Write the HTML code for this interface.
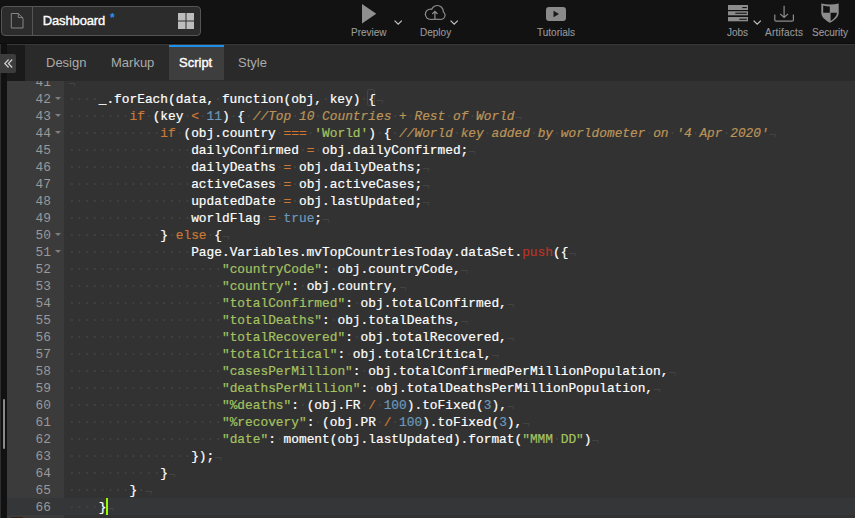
<!DOCTYPE html>
<html><head><meta charset="utf-8">
<style>
*{margin:0;padding:0;box-sizing:border-box}
html,body{width:855px;height:518px;overflow:hidden;background:#121212;font-family:"Liberation Sans",sans-serif}
#top{position:absolute;left:0;top:0;width:855px;height:44px;background:#121212}
#dash{position:absolute;left:1px;top:6px;width:200px;height:30px;border:1px solid #555;border-radius:4px;background:#2c2c2c}
#dash .div{position:absolute;left:30px;top:0;width:1px;height:28px;background:#555}
#dash .t{position:absolute;left:40.8px;top:6px;font-size:13px;color:#fff;-webkit-text-stroke:0.35px #fff;letter-spacing:-0.15px}
#dash .star{position:absolute;left:108px;top:4px;font-size:12px;font-weight:bold;color:#2e8ff0}
svg{position:absolute;overflow:visible}
.lbl{position:absolute;top:26.9px;font-size:10px;color:#999;white-space:nowrap;-webkit-text-stroke:0.1px #999}
#tabs{position:absolute;left:0;top:44px;width:855px;height:37px;background:#2a2a2a;border-top:1px solid #383838}
#tline{position:absolute;left:0;top:43px;width:855px;height:1px;background:#0c0c0c}
#tabs .lft{position:absolute;left:7px;top:0;width:18px;height:37px;background:#1a1a1a}
#tabs .tab{position:absolute;top:10px;font-size:13px;color:#aaa}
#tabs .act{position:absolute;left:169px;top:0;width:55px;height:35px;background:#3e3e3e;border-top:2px solid #1e90ea}
#coll{position:absolute;left:0;top:54px;width:16px;height:19px;background:#3c3c3c;border-radius:0 2px 2px 0}
#lstrip{position:absolute;left:0;top:44px;width:1px;height:474px;background:#2e2e2e}
#bstrip{position:absolute;left:1px;top:44px;width:6px;height:474px;background:#111}
#thumb{position:absolute;left:3px;top:399px;width:2px;height:50px;background:#8a8a8a;border-radius:1px}
#ed{position:absolute;left:7px;top:81px;width:848px;height:437px;background:#323232;overflow:hidden}
#gut{position:absolute;left:0;top:-8px;width:57px;height:460px;background:#3b3b3b}
#gut div{position:relative;height:17px;line-height:17px;padding-top:1px;text-align:right;padding-right:13px;color:#999;font-family:"Liberation Mono",monospace;font-size:12.83px}
#gut div.al{background:#353637}
#gut u{position:absolute;left:48.3px;top:7px;width:0;height:0;border-left:3px solid transparent;border-right:3px solid transparent;border-top:3px solid #7e7e7e}
#code{position:absolute;left:60.9px;top:-7px;width:800px;font-family:"Liberation Mono",monospace;font-size:12.83px;color:#fff;white-space:pre;-webkit-text-stroke:0.2px}
#code div{height:17px;line-height:17px}
#alb{position:absolute;left:57px;top:417px;width:800px;height:17px;background:#353637}
#code i{font-style:normal;color:#444;-webkit-text-stroke:0}
#code i.eol{position:relative;top:1.5px;color:#434343}
#code b{font-weight:normal}
#code .k{color:#cc7833}
#code .c{color:#6c99bb}
#code .s{color:#a5c261}
#code .m{color:#bc9458;font-style:italic}
#code .m i{font-style:normal}
#code .f{color:#b83426}
.bm{position:absolute;width:7.7px;height:17px;border:1px solid #444;border-radius:2px}
#cursor{position:absolute;left:106px;top:498px;width:2px;height:17px;background:#91ff00}
#brown{position:absolute;left:11px;top:517px;width:12px;height:1px;background:#3a1e10}
</style></head><body>
<div id="top">
  <div id="dash">
    <svg style="left:8px;top:5px" width="16" height="18" viewBox="0 0 16 18"><path d="M1.3 1.5 H8.3 L13 6.2 V16 H1.3 Z M8.3 1.5 V5.6 H13" fill="none" stroke="#858585" stroke-width="1"/></svg>
    <div class="div"></div>
    <div class="t">Dashboard</div>
    <div class="star">*</div>
    <svg style="left:176px;top:6px" width="17" height="17" viewBox="0 0 17 17"><g fill="#bdbdbd"><rect x="0" y="0" width="7.5" height="7.5"/><rect x="8.5" y="0" width="7.5" height="7.5"/><rect x="0" y="8.5" width="7.5" height="7.5"/><rect x="8.5" y="8.5" width="7.5" height="7.5"/></g></svg>
  </div>
  <!-- preview -->
  <svg style="left:362px;top:3.6px" width="15" height="20" viewBox="0 0 15 20"><path d="M0 0 L14.3 9.8 L0 19.5 Z" fill="#8f8f8f"/></svg>
  <svg style="left:394px;top:20px" width="9" height="6" viewBox="0 0 9 6"><path d="M0.6 0.6 L4.2 4.2 L7.8 0.6" fill="none" stroke="#c4c4c4" stroke-width="1.2"/></svg>
  <div class="lbl" style="left:351px">Preview</div>
  <!-- deploy -->
  <svg style="left:420px;top:2px" width="30" height="22" viewBox="0 0 30 22"><g fill="#8c8c8c"><circle cx="17.3" cy="9.5" r="6.6"/><circle cx="21" cy="13.3" r="4.6"/><circle cx="10.5" cy="12.2" r="5.7"/><rect x="10.5" y="12.2" width="10.5" height="5.7"/></g><g fill="#121212"><circle cx="17.3" cy="9.5" r="5.4"/><circle cx="21" cy="13.3" r="3.4"/><circle cx="10.5" cy="12.2" r="4.5"/><rect x="10.5" y="12.2" width="10.5" height="4.5"/></g><path d="M14.9 17 V9.6 M12.3 12 L14.9 9.4 L17.5 12" fill="none" stroke="#8c8c8c" stroke-width="1.2"/></svg>
  <svg style="left:450px;top:20px" width="9" height="6" viewBox="0 0 9 6"><path d="M0.6 0.6 L4.2 4.2 L7.8 0.6" fill="none" stroke="#c4c4c4" stroke-width="1.2"/></svg>
  <div class="lbl" style="left:420px">Deploy</div>
  <!-- tutorials -->
  <svg style="left:546px;top:7px" width="20" height="14" viewBox="0 0 20 14"><rect x="0" y="0" width="20" height="14" rx="3" fill="#8a8a8a"/><path d="M7.5 3.8 L13 7 L7.5 10.2 Z" fill="#1a1a1a"/></svg>
  <div class="lbl" style="left:537px">Tutorials</div>
  <!-- jobs -->
  <svg style="left:728px;top:4.8px" width="21" height="17" viewBox="0 0 21 17"><g fill="#8c8c8c"><rect x="0" y="0" width="20" height="5"/><rect x="0" y="6.2" width="20" height="4.1"/><rect x="0" y="12" width="20" height="4.3"/></g><g fill="#151515"><rect x="14.3" y="2" width="4.5" height="1.1"/><rect x="7.3" y="7.7" width="11.5" height="1.1"/><rect x="11.3" y="13.7" width="7.5" height="1.1"/></g></svg>
  <svg style="left:753px;top:20px" width="9" height="6" viewBox="0 0 9 6"><path d="M0.6 0.6 L4.2 4.2 L7.8 0.6" fill="none" stroke="#c4c4c4" stroke-width="1.2"/></svg>
  <div class="lbl" style="left:727px">Jobs</div>
  <!-- artifacts -->
  <svg style="left:774px;top:6px" width="21" height="17" viewBox="0 0 21 17"><path d="M0.8 8.5 V14 Q0.8 15.2 2 15.2 H18.2 Q19.4 15.2 19.4 14 V8.5" fill="none" stroke="#8c8c8c" stroke-width="1.2"/><path d="M10.1 -0.3 V11.2 M6.2 7.9 L10.1 11.5 L14 7.9" fill="none" stroke="#8c8c8c" stroke-width="1.2"/></svg>
  <div class="lbl" style="left:765px;letter-spacing:0.25px">Artifacts</div>
  <!-- security -->
  <svg style="left:821px;top:3px" width="18" height="20" viewBox="0 0 18 20"><path d="M0.3 0.4 Q9 2.4 17.7 0.4 V10 C17.7 14.5 13 17.5 9 19.8 C5 17.5 0.3 14.5 0.3 10 Z" fill="#8c8c8c"/><path d="M2.2 2.4 Q5.5 3.2 8.8 3.4 V9.7 H2.2 Z M9.6 9.7 H15.9 C15.6 13.6 12.6 16 9.6 17.9 Z" fill="#121212"/></svg>
  <div class="lbl" style="left:812px">Security</div>
</div>
<div id="tline"></div>
<div id="tabs">
  <div class="lft"></div>
  <div class="act"></div>
  <div class="tab" style="left:46px">Design</div>
  <div class="tab" style="left:111px">Markup</div>
  <div class="tab" style="left:179px;color:#fff;-webkit-text-stroke:0.4px #fff">Script</div>
  <div class="tab" style="left:238px">Style</div>
</div>
<div id="lstrip"></div>
<div id="bstrip"></div>
<div id="thumb"></div>
<div id="coll"><svg style="left:3.5px;top:4.5px" width="9" height="9" viewBox="0 0 9 9"><path d="M4.6 0.5 L0.8 4.5 L4.6 8.5 M8.2 0.5 L4.4 4.5 L8.2 8.5" fill="none" stroke="#d0d0d0" stroke-width="1.2"/></svg></div>
<div id="ed">
  <div id="alb"></div>
  <div class="bm" style="left:360.1px;top:8px"></div>
  <div id="gut"><div>41</div><div>42<u></u></div><div>43<u></u></div><div>44<u></u></div><div>45</div><div>46</div><div>47</div><div>48</div><div>49</div><div>50<u></u></div><div>51<u></u></div><div>52</div><div>53</div><div>54</div><div>55</div><div>56</div><div>57</div><div>58</div><div>59</div><div>60</div><div>61</div><div>62</div><div>63</div><div>64</div><div>65</div><div class="al">66</div></div>
  <div id="code"><div><i class="eol">¬</i></div><div><i>·</i><i>·</i><i>·</i><i>·</i>_.forEach(data,<i>·</i>function(obj,<i>·</i>key)<i>·</i><b class="br">{</b><i class="eol">¬</i></div><div><i>·</i><i>·</i><i>·</i><i>·</i><i>·</i><i>·</i><i>·</i><i>·</i><b class="k">if</b><i>·</i>(key<i>·</i><b class="k">&lt;</b><i>·</i><b class="c">11</b>)<i>·</i>{<i>·</i><b class="m">//Top<i>·</i>10<i>·</i>Countries<i>·</i>+<i>·</i>Rest<i>·</i>of<i>·</i>World</b><i class="eol">¬</i></div><div><i>·</i><i>·</i><i>·</i><i>·</i><i>·</i><i>·</i><i>·</i><i>·</i><i>·</i><i>·</i><i>·</i><i>·</i><b class="k">if</b><i>·</i>(obj.country<i>·</i><b class="k">===</b><i>·</i><b class="s">&#x27;World&#x27;</b>)<i>·</i>{<i>·</i><b class="m">//World<i>·</i>key<i>·</i>added<i>·</i>by<i>·</i>worldometer<i>·</i>on<i>·</i>&#x27;4<i>·</i>Apr<i>·</i>2020&#x27;</b><i class="eol">¬</i></div><div><i>·</i><i>·</i><i>·</i><i>·</i><i>·</i><i>·</i><i>·</i><i>·</i><i>·</i><i>·</i><i>·</i><i>·</i><i>·</i><i>·</i><i>·</i><i>·</i>dailyConfirmed<i>·</i><b class="k">=</b><i>·</i>obj.dailyConfirmed;<i class="eol">¬</i></div><div><i>·</i><i>·</i><i>·</i><i>·</i><i>·</i><i>·</i><i>·</i><i>·</i><i>·</i><i>·</i><i>·</i><i>·</i><i>·</i><i>·</i><i>·</i><i>·</i>dailyDeaths<i>·</i><b class="k">=</b><i>·</i>obj.dailyDeaths;<i class="eol">¬</i></div><div><i>·</i><i>·</i><i>·</i><i>·</i><i>·</i><i>·</i><i>·</i><i>·</i><i>·</i><i>·</i><i>·</i><i>·</i><i>·</i><i>·</i><i>·</i><i>·</i>activeCases<i>·</i><b class="k">=</b><i>·</i>obj.activeCases;<i class="eol">¬</i></div><div><i>·</i><i>·</i><i>·</i><i>·</i><i>·</i><i>·</i><i>·</i><i>·</i><i>·</i><i>·</i><i>·</i><i>·</i><i>·</i><i>·</i><i>·</i><i>·</i>updatedDate<i>·</i><b class="k">=</b><i>·</i>obj.lastUpdated;<i class="eol">¬</i></div><div><i>·</i><i>·</i><i>·</i><i>·</i><i>·</i><i>·</i><i>·</i><i>·</i><i>·</i><i>·</i><i>·</i><i>·</i><i>·</i><i>·</i><i>·</i><i>·</i>worldFlag<i>·</i><b class="k">=</b><i>·</i><b class="c">true</b>;<i class="eol">¬</i></div><div><i>·</i><i>·</i><i>·</i><i>·</i><i>·</i><i>·</i><i>·</i><i>·</i><i>·</i><i>·</i><i>·</i><i>·</i>}<i>·</i><b class="k">else</b><i>·</i>{<i class="eol">¬</i></div><div><i>·</i><i>·</i><i>·</i><i>·</i><i>·</i><i>·</i><i>·</i><i>·</i><i>·</i><i>·</i><i>·</i><i>·</i><i>·</i><i>·</i><i>·</i><i>·</i>Page.Variables.mvTopCountriesToday.dataSet.<b class="f">push</b>({<i class="eol">¬</i></div><div><i>·</i><i>·</i><i>·</i><i>·</i><i>·</i><i>·</i><i>·</i><i>·</i><i>·</i><i>·</i><i>·</i><i>·</i><i>·</i><i>·</i><i>·</i><i>·</i><i>·</i><i>·</i><i>·</i><i>·</i><b class="s">&quot;countryCode&quot;</b>:<i>·</i>obj.countryCode,<i class="eol">¬</i></div><div><i>·</i><i>·</i><i>·</i><i>·</i><i>·</i><i>·</i><i>·</i><i>·</i><i>·</i><i>·</i><i>·</i><i>·</i><i>·</i><i>·</i><i>·</i><i>·</i><i>·</i><i>·</i><i>·</i><i>·</i><b class="s">&quot;country&quot;</b>:<i>·</i>obj.country,<i class="eol">¬</i></div><div><i>·</i><i>·</i><i>·</i><i>·</i><i>·</i><i>·</i><i>·</i><i>·</i><i>·</i><i>·</i><i>·</i><i>·</i><i>·</i><i>·</i><i>·</i><i>·</i><i>·</i><i>·</i><i>·</i><i>·</i><b class="s">&quot;totalConfirmed&quot;</b>:<i>·</i>obj.totalConfirmed,<i class="eol">¬</i></div><div><i>·</i><i>·</i><i>·</i><i>·</i><i>·</i><i>·</i><i>·</i><i>·</i><i>·</i><i>·</i><i>·</i><i>·</i><i>·</i><i>·</i><i>·</i><i>·</i><i>·</i><i>·</i><i>·</i><i>·</i><b class="s">&quot;totalDeaths&quot;</b>:<i>·</i>obj.totalDeaths,<i class="eol">¬</i></div><div><i>·</i><i>·</i><i>·</i><i>·</i><i>·</i><i>·</i><i>·</i><i>·</i><i>·</i><i>·</i><i>·</i><i>·</i><i>·</i><i>·</i><i>·</i><i>·</i><i>·</i><i>·</i><i>·</i><i>·</i><b class="s">&quot;totalRecovered&quot;</b>:<i>·</i>obj.totalRecovered,<i class="eol">¬</i></div><div><i>·</i><i>·</i><i>·</i><i>·</i><i>·</i><i>·</i><i>·</i><i>·</i><i>·</i><i>·</i><i>·</i><i>·</i><i>·</i><i>·</i><i>·</i><i>·</i><i>·</i><i>·</i><i>·</i><i>·</i><b class="s">&quot;totalCritical&quot;</b>:<i>·</i>obj.totalCritical,<i class="eol">¬</i></div><div><i>·</i><i>·</i><i>·</i><i>·</i><i>·</i><i>·</i><i>·</i><i>·</i><i>·</i><i>·</i><i>·</i><i>·</i><i>·</i><i>·</i><i>·</i><i>·</i><i>·</i><i>·</i><i>·</i><i>·</i><b class="s">&quot;casesPerMillion&quot;</b>:<i>·</i>obj.totalConfirmedPerMillionPopulation,<i class="eol">¬</i></div><div><i>·</i><i>·</i><i>·</i><i>·</i><i>·</i><i>·</i><i>·</i><i>·</i><i>·</i><i>·</i><i>·</i><i>·</i><i>·</i><i>·</i><i>·</i><i>·</i><i>·</i><i>·</i><i>·</i><i>·</i><b class="s">&quot;deathsPerMillion&quot;</b>:<i>·</i>obj.totalDeathsPerMillionPopulation,<i class="eol">¬</i></div><div><i>·</i><i>·</i><i>·</i><i>·</i><i>·</i><i>·</i><i>·</i><i>·</i><i>·</i><i>·</i><i>·</i><i>·</i><i>·</i><i>·</i><i>·</i><i>·</i><i>·</i><i>·</i><i>·</i><i>·</i><b class="s">&quot;%deaths&quot;</b>:<i>·</i>(obj.FR<i>·</i><b class="k">/</b><i>·</i><b class="c">100</b>).toFixed(<b class="c">3</b>),<i class="eol">¬</i></div><div><i>·</i><i>·</i><i>·</i><i>·</i><i>·</i><i>·</i><i>·</i><i>·</i><i>·</i><i>·</i><i>·</i><i>·</i><i>·</i><i>·</i><i>·</i><i>·</i><i>·</i><i>·</i><i>·</i><i>·</i><b class="s">&quot;%recovery&quot;</b>:<i>·</i>(obj.PR<i>·</i><b class="k">/</b><i>·</i><b class="c">100</b>).toFixed(<b class="c">3</b>),<i class="eol">¬</i></div><div><i>·</i><i>·</i><i>·</i><i>·</i><i>·</i><i>·</i><i>·</i><i>·</i><i>·</i><i>·</i><i>·</i><i>·</i><i>·</i><i>·</i><i>·</i><i>·</i><i>·</i><i>·</i><i>·</i><i>·</i><b class="s">&quot;date&quot;</b>:<i>·</i>moment(obj.lastUpdated).format(<b class="s">&quot;MMM<i>·</i>DD&quot;</b>)<i class="eol">¬</i></div><div><i>·</i><i>·</i><i>·</i><i>·</i><i>·</i><i>·</i><i>·</i><i>·</i><i>·</i><i>·</i><i>·</i><i>·</i><i>·</i><i>·</i><i>·</i><i>·</i>});<i class="eol">¬</i></div><div><i>·</i><i>·</i><i>·</i><i>·</i><i>·</i><i>·</i><i>·</i><i>·</i><i>·</i><i>·</i><i>·</i><i>·</i>}<i class="eol">¬</i></div><div><i>·</i><i>·</i><i>·</i><i>·</i><i>·</i><i>·</i><i>·</i><i>·</i>}<i>·</i><i class="eol">¬</i></div><div class="al"><i>·</i><i>·</i><i>·</i><i>·</i><b class="br">}</b><i class="eol">¬</i></div></div>
</div>
<div id="cursor"></div>
<div id="brown"></div>
</body></html>
